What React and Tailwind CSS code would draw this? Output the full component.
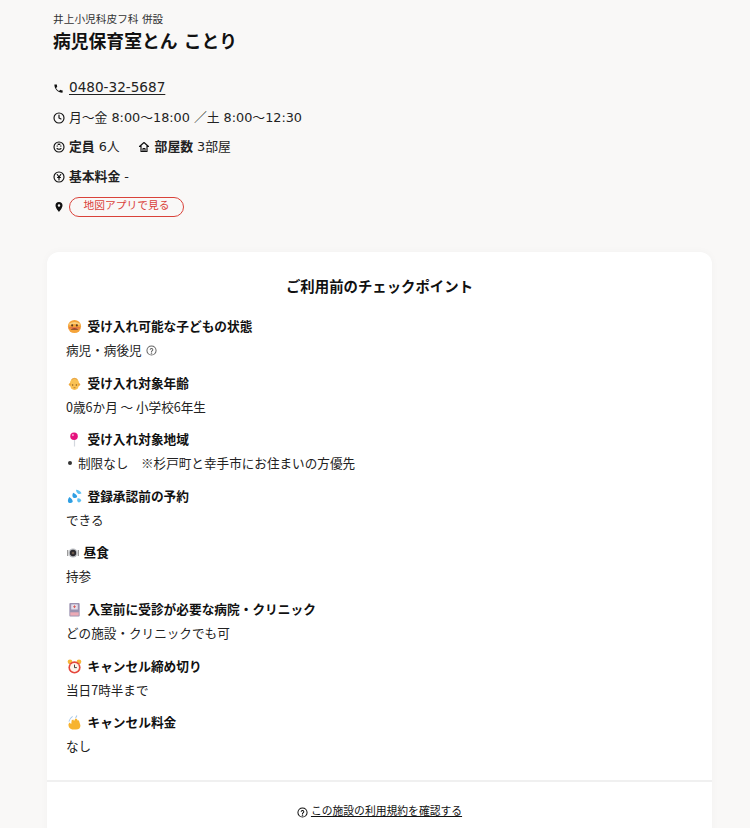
function Ic({ children }) {
  return (
    <svg viewBox="0 0 24 24" className="w-[12px] h-[12px] shrink-0 mt-[1px]" fill="none" stroke="#111" strokeWidth="2.300" strokeLinecap="round" strokeLinejoin="round">
      {children}
    </svg>
  );
}

function Em({ children, small }) {
  return <svg viewBox="0 0 16 16" className={small ? "w-[12px] h-[12px] shrink-0 -mr-[1px]" : "w-[15px] h-[15px] shrink-0"}>{children}</svg>;
}

const emojis = {
  sick: (
    <Em>
      <circle cx="8" cy="8" r="7" fill="#f5a43a" />
      <path d="M2.500 6Q8 2.500 13.500 6" stroke="#f9cf7c" strokeWidth="2" fill="none" />
      <circle cx="5.500" cy="6.800" r="1.100" fill="#5a3a20" />
      <circle cx="10.500" cy="6.800" r="1.100" fill="#5a3a20" />
      <path d="M3.500 11.500Q8 7.500 12.500 11.500Z" fill="#7a3b2a" />
      <path d="M2 9.500h12" stroke="#d9534f" strokeWidth="0.900" />
    </Em>
  ),
  baby: (
    <Em>
      <ellipse cx="8" cy="8.500" rx="5" ry="6.500" fill="#f9c255" />
      <circle cx="3.200" cy="9" r="1.300" fill="#f0a93f" />
      <circle cx="12.800" cy="9" r="1.300" fill="#f0a93f" />
      <path d="M5 4q3-3 6 0" stroke="#e9a84a" strokeWidth="1.200" fill="none" />
      <circle cx="6" cy="9.500" r="0.800" fill="#8a5a20" />
      <circle cx="10" cy="9.500" r="0.800" fill="#8a5a20" />
      <path d="M7 12.500h2" stroke="#b5702a" strokeWidth="0.900" />
    </Em>
  ),
  pin: (
    <Em>
      <path d="M8 7v8.500" stroke="#d3d8de" strokeWidth="1.300" />
      <circle cx="7.500" cy="4.500" r="4" fill="#e5127d" />
      <circle cx="6.300" cy="3.300" r="1.100" fill="#f7a0cc" />
    </Em>
  ),
  drops: (
    <Em>
      <path d="M2.500 8.500Q0 12 1.500 14.300Q4 15.800 6 13.800Q6.500 11 2.500 8.500z" fill="#2f9fe3" />
      <path d="M6.500 4Q5 7.500 6.500 9Q9 10.500 10.800 8.500Q11 6 6.500 4z" fill="#2f9fe3" />
      <path d="M9.500 .8Q13.500 1 15.500 4.500Q13.500 6 11.500 4.800Q9.800 3.500 9.500 .8z" fill="#5cc0f2" />
      <path d="M11 10Q14 9.500 15.300 12Q14.500 14.800 12 14.200Q10.300 12.800 11 10z" fill="#5cc0f2" />
    </Em>
  ),
  meal: (
    <Em small>
      <path d="M1 4v8" stroke="#777" strokeWidth="1.300" />
      <path d="M15 4v8" stroke="#777" strokeWidth="1.300" />
      <circle cx="8" cy="8" r="6" fill="#b9bcc0" />
      <circle cx="8" cy="8" r="4.200" fill="#2c2a2e" />
      <circle cx="8" cy="8" r="1.800" fill="#6b5a4d" />
    </Em>
  ),
  clip: (
    <Em>
      <rect x="2.500" y="1" width="11" height="14.500" rx="1" fill="#9a92b0" />
      <rect x="4.500" y="2.500" width="7" height="5.500" fill="#e4dfec" />
      <path d="M8 3.500v3M6.500 5h3" stroke="#d9534f" strokeWidth="0.900" />
      <rect x="3.500" y="11" width="9" height="3.500" fill="#ecaab5" />
    </Em>
  ),
  alarm: (
    <Em>
      <circle cx="3.200" cy="3" r="2.500" fill="#f5b73b" />
      <circle cx="12.800" cy="3" r="2.500" fill="#f5b73b" />
      <circle cx="8" cy="9" r="6.500" fill="#e5473c" />
      <circle cx="8" cy="9" r="4.800" fill="#fdf4ec" />
      <path d="M8 6v3.200h2.500" stroke="#333" strokeWidth="1" fill="none" />
    </Em>
  ),
  wave: (
    <Em>
      <path d="M2 7q1-3.500 4-5.500M9 3q1-1 1.500-2.500" stroke="#a9c9ea" strokeWidth="1.100" fill="none" />
      <path d="M5.500 15.500Q1.500 14 1.500 10L2.500 8 4.500 9.500 5 5.500 6.700 4.800 7.500 6.500 9 3.800 10.700 4.300 11 5.500 12.700 5.800 13.500 8.500 14.300 11Q14.500 15.500 9.500 15.500z" fill="#f7b32f" />
    </Em>
  ),
};

const items = [
  ["sick", "受け入れ可能な子どもの状態", <span className="flex items-center gap-[4px]">病児・病後児<svg viewBox="0 0 24 24" className="w-[11px] h-[11px] mt-[2px]" fill="none" stroke="#666" strokeWidth="2.200"><circle cx="12" cy="12" r="10" /><path d="M9.200 9.500a3 3 0 0 1 5.700 1c0 2-3 2.500-3 4" strokeLinecap="round" /><circle cx="12" cy="18" r="0.600" /></svg></span>],
  ["baby", "受け入れ対象年齢", "0歳6か月 〜 小学校6年生"],
  ["pin", "受け入れ対象地域", <span className="flex items-center"><span className="w-[4px] h-[4px] rounded-full bg-[#333] ml-[2px] mr-[6px]" />制限なし　※杉戸町と幸手市にお住まいの方優先</span>],
  ["drops", "登録承認前の予約", "できる"],
  ["meal", "昼食", "持参"],
  ["clip", "入室前に受診が必要な病院・クリニック", "どの施設・クリニックでも可"],
  ["alarm", "キャンセル締め切り", "当日7時半まで"],
  ["wave", "キャンセル料金", "なし"],
];

export default function App() {
  return (
    <div className="bg-[#f9f8f7] h-[828px] overflow-hidden pl-[47px] pr-[38px] text-[#111]" style={{ fontFamily: '"DejaVu Sans","Noto Sans CJK JP",sans-serif' }}>
      <div className="px-[6px] pt-[13px] h-[252px]">
        <p className="text-[10.700px] leading-[14px] text-[#333]">井上小児科皮フ科 併設</p>
        <h1 className="text-[17.800px] font-bold leading-[24px] mt-[3px]">病児保育室とん ことり</h1>
        <div className="mt-[24px] flex flex-col gap-[10px] text-[12.800px] leading-[19.500px] text-[#222]">
          <div className="flex items-center gap-[5px]">
            <svg viewBox="0 0 24 24" className="w-[11px] h-[11px] mt-[2px]" fill="#111"><path d="M6.600 10.800c1.400 2.800 3.800 5.100 6.600 6.600l2.200-2.200c.3-.3.700-.4 1-.2 1.100.4 2.300.6 3.600.6.600 0 1 .4 1 1V20c0 .6-.4 1-1 1C10.600 21 3 13.400 3 4c0-.6.400-1 1-1h3.500c.6 0 1 .4 1 1 0 1.300.2 2.500.6 3.600.1.300 0 .7-.2 1z" /></svg>
            <a className="underline underline-offset-2 text-[13.600px]">0480-32-5687</a>
          </div>
          <div className="flex items-center gap-[4px]">
            <Ic><circle cx="12" cy="12" r="10" /><path d="M12 6v6l4 2" /></Ic>
            <span>月〜金 8:00〜18:00 ／土 8:00〜12:30</span>
          </div>
          <div className="flex items-center gap-[4px]">
            <Ic><circle cx="12" cy="12" r="10" /><path d="M8 15q4 3 8 0M8 10h1M15 10h1M10 6q2 1.500 4 0" /></Ic>
            <span><b className="font-bold">定員</b> 6人</span>
            <span className="w-[10px]" />
            <Ic><path d="M3 11l9-8 9 8M6 9v12h12V9" /><path d="M10 21v-6h4v6" /></Ic>
            <span className="ml-[1px]"><b className="font-bold">部屋数</b> 3部屋</span>
          </div>
          <div className="flex items-center gap-[4px]">
            <Ic><circle cx="12" cy="12" r="10" /><path d="M8.500 7l3.500 5 3.500-5M12 12v6M9 13h6" /></Ic>
            <span><b className="font-bold">基本料金</b> -</span>
          </div>
          <div className="flex items-center gap-[4px] mt-[1px]">
            <svg viewBox="0 0 24 24" className="w-[12px] h-[12px]" fill="#111"><path d="M12 2a7 7 0 0 0-7 7c0 5 7 13 7 13s7-8 7-13a7 7 0 0 0-7-7zm0 9.500a2.500 2.500 0 1 1 0-5 2.500 2.500 0 0 1 0 5z" /></svg>
            <span className="border border-[#d9423a] rounded-full text-[#d9423a] text-[10.750px] leading-[14px] h-[20px] w-[115px] flex items-center justify-center pb-[2px]">地図アプリで見る</span>
          </div>
        </div>
      </div>

      <div className="bg-white rounded-t-[12px] shadow-[0_0_8px_rgba(0,0,0,0.03)] pb-[20px]">
        <h2 className="text-[14.400px] font-bold text-center leading-[20px] pt-[25px] pb-[20px]">ご利用前のチェックポイント</h2>
        <div className="px-[19px] flex flex-col gap-[14.600px] pb-[25px]">
          {items.map(([e, title, val]) => (
            <div key={title}>
              <div className="flex items-center gap-[6px] text-[12.700px] font-bold leading-[19px] pl-[0.500px]">
                {emojis[e]}
                <span>{title}</span>
              </div>
              <div className="text-[12.600px] leading-[19px] mt-[4px] text-[#222]" style={{ fontFamily: '"Noto Sans CJK JP",sans-serif' }}>{val}</div>
            </div>
          ))}
        </div>
        <div className="border-t-2 border-[#f0f0f0] pt-[22px] flex justify-center items-center gap-[3px] text-[10.800px] leading-[16px]">
          <svg viewBox="0 0 24 24" className="w-[11px] h-[11px] mt-[1px]" fill="none" stroke="#111" strokeWidth="2.200"><circle cx="12" cy="12" r="10" /><path d="M9.200 9.500a3 3 0 0 1 5.700 1c0 2-3 2.500-3 4" strokeLinecap="round" /><circle cx="12" cy="18" r="0.600" /></svg>
          <a className="underline">この施設の利用規約を確認する</a>
        </div>
      </div>
    </div>
  );
}
